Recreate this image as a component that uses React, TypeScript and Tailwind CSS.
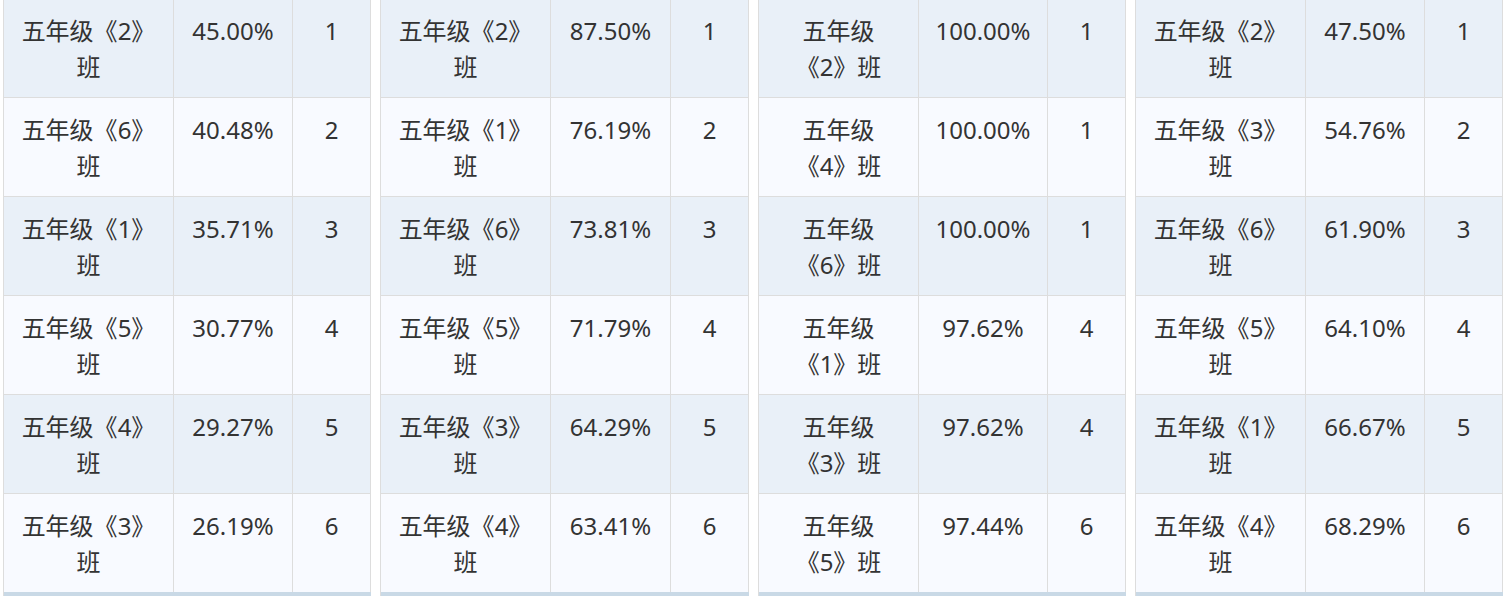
const tables = [
  {
    cols: ["w-[170px]", "w-[119px]", "w-[78px]"],
    split: false,
    rows: [
      ["2", "45.00%", "1"],
      ["6", "40.48%", "2"],
      ["1", "35.71%", "3"],
      ["5", "30.77%", "4"],
      ["4", "29.27%", "5"],
      ["3", "26.19%", "6"],
    ],
  },
  {
    cols: ["w-[170px]", "w-[120px]", "w-[78px]"],
    split: false,
    rows: [
      ["2", "87.50%", "1"],
      ["1", "76.19%", "2"],
      ["6", "73.81%", "3"],
      ["5", "71.79%", "4"],
      ["3", "64.29%", "5"],
      ["4", "63.41%", "6"],
    ],
  },
  {
    cols: ["w-[160px]", "w-[129px]", "w-[78px]"],
    split: true,
    rows: [
      ["2", "100.00%", "1"],
      ["4", "100.00%", "1"],
      ["6", "100.00%", "1"],
      ["1", "97.62%", "4"],
      ["3", "97.62%", "4"],
      ["5", "97.44%", "6"],
    ],
  },
  {
    cols: ["w-[170px]", "w-[119px]", "w-[78px]"],
    split: false,
    rows: [
      ["2", "47.50%", "1"],
      ["3", "54.76%", "2"],
      ["6", "61.90%", "3"],
      ["5", "64.10%", "4"],
      ["1", "66.67%", "5"],
      ["4", "68.29%", "6"],
    ],
  },
];

const RankTable = ({ cols, split, rows }: (typeof tables)[number]) => {
  return (
    <div className="flex flex-col border-l border-[#dddddd]">
      {rows.map(([cls, rate, rank], i) => (
        <div
          key={i}
          className={`flex border-b ${
            i === rows.length - 1 ? "border-[#c9d9e6]" : "border-[#dddddd]"
          } ${i % 2 === 0 ? "bg-[#e9f0f8]" : "bg-[#f8faff]"}`}
        >
          <div
            className={`${cols[0]} shrink-0 border-r border-[#dddddd] px-[14px] pt-[14px] pb-[12px] text-center`}
          >
            {split ? (
              <>
                <div>五年级</div>
                <div>《{cls}》班</div>
              </>
            ) : (
              <>
                <div className="whitespace-nowrap">五年级《{cls}》</div>
                <div>班</div>
              </>
            )}
          </div>
          <div
            className={`${cols[1]} shrink-0 border-r border-[#dddddd] pt-[14px] pb-[12px] text-center`}
          >
            {rate}
          </div>
          <div
            className={`${cols[2]} shrink-0 border-r border-[#dddddd] pt-[14px] pb-[12px] text-center`}
          >
            {rank}
          </div>
        </div>
      ))}
      <div className="h-[4px] border-r border-[#c9d9e6] bg-[#c9d9e6]" />
    </div>
  );
};

export default function App() {
  return (
    <div className="min-h-screen overflow-hidden bg-white">
      <div
        className="-mt-px flex gap-[9px] pl-[3px] text-[24px] leading-[36px] text-[#333333]"
        style={{ fontFamily: '"Noto Sans", "Noto Sans CJK SC", sans-serif' }}
      >
        {tables.map((t, i) => (
          <RankTable key={i} {...t} />
        ))}
      </div>
    </div>
  );
}
